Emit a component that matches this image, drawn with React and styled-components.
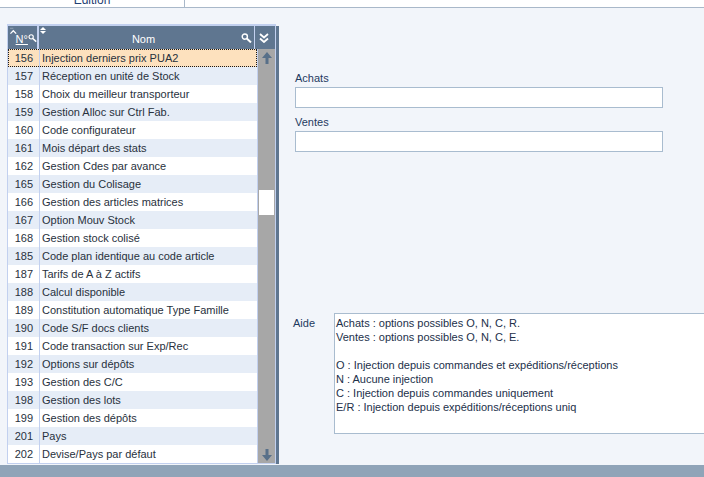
import React from 'react';
import styled, { createGlobalStyle } from 'styled-components';

const GlobalStyle = createGlobalStyle`
  html, body { margin: 0; padding: 0; }
  body {
    background: #f2f5fa;
    font-family: "Liberation Sans", Arial, sans-serif;
    font-size: 11px;
    overflow: hidden;
  }
`;

const Page = styled.div`
  display: flex;
  flex-direction: column;
  width: 704px;
  height: 477px;
  overflow: hidden;
`;

const TopBar = styled.div`
  height: 7px;
  background: #ffffff;
  border-bottom: 1px solid #a9b8c9;
  display: flex;
  overflow: hidden;
  flex-shrink: 0;
`;

const Tab = styled.div`
  width: 184px;
  border-right: 1px solid #a9b8c9;
  display: flex;
  justify-content: center;
  align-items: flex-end;
  font-size: 12px;
  color: #1f3f73;
`;

const TabLabel = styled.span`
  line-height: 14px;
`;

const Main = styled.div`
  flex: 1;
  display: flex;
  align-items: flex-start;
  padding: 16px 0 0 7px;
  box-sizing: border-box;
  min-height: 0;
`;

const TableWrap = styled.div`
  display: flex;
  align-items: stretch;
  flex-shrink: 0;
`;

const Table = styled.div`
  width: 269px;
  box-sizing: border-box;
  border: 1px solid #c2d0ef;
  border-top-width: 2px;
  background: #ffffff;
`;

const Shadow = styled.div`
  width: 3px;
  margin-top: 2px;
  background: #5f7690;
`;

const Header = styled.div`
  display: flex;
  height: 23px;
  background: #5f7690;
  color: #ffffff;
`;

const HeadNum = styled.div`
  width: 31px;
  border-right: 2px solid #c2d0ef;
  display: flex;
  align-items: center;
  padding-left: 2px;
  box-sizing: border-box;
`;

const HeadNumText = styled.span`
  text-decoration: underline;
  line-height: 12px;
  margin-top: 3px;
  margin-left: -1px;
`;

const HeadName = styled.div`
  width: 216px;
  border-right: 1px solid #c2d0ef;
  display: flex;
  align-items: center;
  justify-content: space-between;
  padding: 0 2px 0 1px;
  box-sizing: border-box;
`;

const HeadTitle = styled.span`
  line-height: 12px;
  margin-top: 2px;
`;

const HeadCollapse = styled.div`
  width: 17px;
  display: flex;
  align-items: center;
  justify-content: center;
`;

const Body = styled.div`
  display: flex;
`;

const RowsList = styled.div`
  width: 249px;
  border-right: 1px solid #c2d0ef;
`;

const Row = styled.div`
  display: flex;
  height: 18px;
  line-height: 18px;
  color: #28313d;
  background: ${(p) => (p.$selected ? '#fde1be' : p.$alt ? '#e6edf7' : '#ffffff')};
  outline: ${(p) => (p.$selected ? '1px dotted #1a1a1a' : 'none')};
  outline-offset: -1px;
  white-space: nowrap;
`;

const NumCell = styled.div`
  width: 32px;
  box-sizing: border-box;
  border-right: 1px solid #c2d0ef;
  text-align: right;
  padding-right: 6px;
`;

const NameCell = styled.div`
  flex: 1;
  padding-left: 2px;
  overflow: hidden;
`;

const Scrollbar = styled.div`
  width: 17px;
  background: #a7a7a7;
  display: flex;
  flex-direction: column;
`;

const ScrollButton = styled.div`
  height: 17px;
  display: flex;
  align-items: center;
  justify-content: center;
`;

const Track = styled.div`
  flex: 1;
`;

const Thumb = styled.div`
  height: 25px;
  margin: 0 1px;
  background: #ffffff;
`;

const RightPanel = styled.div`
  margin-left: 16px;
  padding-top: 47px;
  display: flex;
  flex-direction: column;
`;

const FieldLabel = styled.div`
  line-height: 14px;
  color: #1e3a5f;
  margin-bottom: 2px;
`;

const Input = styled.div`
  width: 368px;
  height: 21px;
  box-sizing: border-box;
  border: 1px solid #a9bccf;
  background: #ffffff;
  margin-bottom: 7px;
`;

const AideRow = styled.div`
  display: flex;
  margin-top: 154px;
  margin-left: -2px;
`;

const AideLabel = styled.div`
  width: 41px;
  padding-top: 3px;
  line-height: 14px;
  color: #1e3a5f;
`;

const HelpBox = styled.div`
  width: 390px;
  height: 121px;
  box-sizing: border-box;
  border: 1px solid #a9bccf;
  background: #ffffff;
  padding: 2px 1px;
  line-height: 14px;
  white-space: pre-line;
  color: #22304a;
`;

const BottomBand = styled.div`
  height: 12px;
  background: #90a4b8;
  flex-shrink: 0;
`;

const rows = [
  ['156', 'Injection derniers prix PUA2'],
  ['157', 'Réception en unité de Stock'],
  ['158', 'Choix du meilleur transporteur'],
  ['159', 'Gestion Alloc sur Ctrl Fab.'],
  ['160', 'Code configurateur'],
  ['161', 'Mois départ des stats'],
  ['162', 'Gestion Cdes par avance'],
  ['165', 'Gestion du Colisage'],
  ['166', 'Gestion des articles matrices'],
  ['167', 'Option Mouv Stock'],
  ['168', 'Gestion stock colisé'],
  ['185', 'Code plan identique au code article'],
  ['187', 'Tarifs de A à Z actifs'],
  ['188', 'Calcul disponible'],
  ['189', 'Constitution automatique Type Famille'],
  ['190', 'Code S/F docs clients'],
  ['191', 'Code transaction sur Exp/Rec'],
  ['192', 'Options sur dépôts'],
  ['193', 'Gestion des C/C'],
  ['198', 'Gestion des lots'],
  ['199', 'Gestion des dépôts'],
  ['201', 'Pays'],
  ['202', 'Devise/Pays par défaut'],
];

const helpText = `Achats : options possibles O, N, C, R.
Ventes : options possibles O, N, C, E.

O : Injection depuis commandes et expéditions/réceptions
N : Aucune injection
C : Injection depuis commandes uniquement
E/R : Injection depuis expéditions/réceptions uniq`;

const SortAsc = () => (
  <svg width="8" height="10" viewBox="0 0 8 10" style={{ alignSelf: 'flex-start', marginTop: 1 }}>
    <line x1="0" y1="0.5" x2="4" y2="0.5" stroke="#9aa9ba" strokeWidth="1" />
    <polyline points="0.5,7 4,3.5 7.5,7" fill="none" stroke="#ffffff" strokeWidth="1.6" />
  </svg>
);

const Magnifier = () => (
  <svg width="11" height="10" viewBox="0 0 11 10">
    <circle cx="3.8" cy="3.6" r="2.6" fill="none" stroke="#ffffff" strokeWidth="1.4" />
    <line x1="5.8" y1="5.6" x2="10" y2="9.4" stroke="#ffffff" strokeWidth="2" />
  </svg>
);

const UpDown = () => (
  <svg width="6" height="7" viewBox="0 0 6 7" style={{ alignSelf: 'flex-start', marginTop: 1 }}>
    <polygon points="3,0 6,3 0,3" fill="#ffffff" />
    <polygon points="0,4 6,4 3,7" fill="#ffffff" />
  </svg>
);

const DoubleChevron = () => (
  <svg width="10" height="10" viewBox="0 0 10 10">
    <polyline points="1,1 5,4.5 9,1" fill="none" stroke="#ffffff" strokeWidth="1.8" />
    <polyline points="1,5.5 5,9 9,5.5" fill="none" stroke="#ffffff" strokeWidth="1.8" />
  </svg>
);

const ArrowUp = () => (
  <svg width="10" height="12" viewBox="0 0 10 12">
    <polygon points="5,0 10,6 6.5,6 6.5,12 3.5,12 3.5,6 0,6" fill="#587089" />
  </svg>
);

const ArrowDown = () => (
  <svg width="10" height="12" viewBox="0 0 10 12">
    <polygon points="3.5,0 6.5,0 6.5,6 10,6 5,12 0,6 3.5,6" fill="#587089" />
  </svg>
);

export default function App() {
  return (
    <Page>
      <GlobalStyle />
      <TopBar>
        <Tab>
          <TabLabel>Edition</TabLabel>
        </Tab>
      </TopBar>
      <Main>
        <TableWrap>
          <Table>
            <Header>
              <HeadNum>
                <SortAsc />
                <HeadNumText>N°</HeadNumText>
                <Magnifier />
              </HeadNum>
              <HeadName>
                <UpDown />
                <HeadTitle>Nom</HeadTitle>
                <Magnifier />
              </HeadName>
              <HeadCollapse>
                <DoubleChevron />
              </HeadCollapse>
            </Header>
            <Body>
              <RowsList>
                {rows.map(([n, name], i) => (
                  <Row key={n} $selected={i === 0} $alt={i % 2 === 1}>
                    <NumCell>{n}</NumCell>
                    <NameCell>{name}</NameCell>
                  </Row>
                ))}
              </RowsList>
              <Scrollbar>
                <ScrollButton>
                  <ArrowUp />
                </ScrollButton>
                <Track>
                  <Thumb style={{ marginTop: 124 }} />
                </Track>
                <ScrollButton>
                  <ArrowDown />
                </ScrollButton>
              </Scrollbar>
            </Body>
          </Table>
          <Shadow />
        </TableWrap>
        <RightPanel>
          <FieldLabel>Achats</FieldLabel>
          <Input />
          <FieldLabel>Ventes</FieldLabel>
          <Input />
          <AideRow>
            <AideLabel>Aide</AideLabel>
            <HelpBox>{helpText}</HelpBox>
          </AideRow>
        </RightPanel>
      </Main>
      <BottomBand />
    </Page>
  );
}
